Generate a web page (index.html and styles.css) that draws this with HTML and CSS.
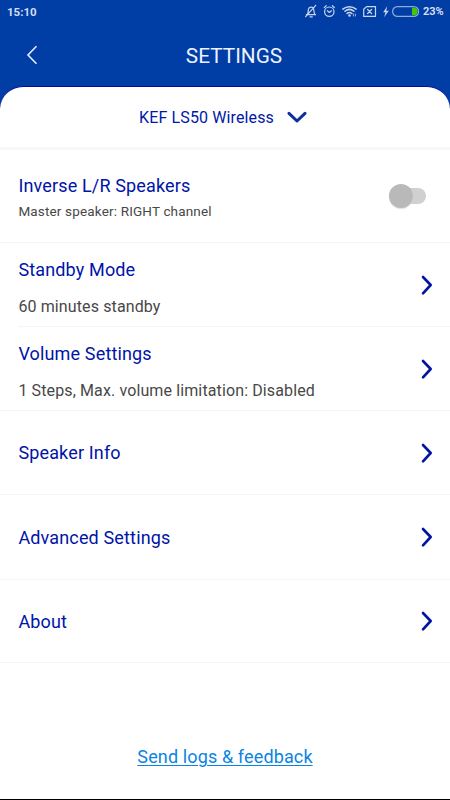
FILE: index.html
```html
<!DOCTYPE html>
<html lang="en">
<head>
<meta charset="utf-8">
<title>Settings</title>
<link rel="stylesheet" href="styles.css">
</head>
<body>
<div class="screen">
  <div class="status-bar">
    <span class="clock">15:10</span>
    <svg class="status-icons" width="116" height="20" viewBox="304 2 116 20" fill="none" stroke="#c8d5ef" stroke-width="1.2" stroke-linecap="round" stroke-linejoin="round">
      <path d="M306.300 14.600h9.300M307.400 14.300c1-1.500.7-4 1.200-5.600.7-2 4.200-2 5 0 .5 1.600.1 4.100 1.200 5.600M310 16.800h2.300M315.700 5.300 305.700 16.700"/>
      <circle cx="329.300" cy="11.700" r="4.700"/>
      <path d="M327.300 10.800l2 1.700 2.200-1.700M324.200 7.600l2-1.900M334.400 7.600l-2-1.900"/>
      <path d="M342.800 9.100c3.900-3.300 9.400-3.300 13.300 0M344.900 11.300c2.700-2.300 6.400-2.300 9.100 0M347 13.500c1.500-1.300 3.400-1.300 4.900 0" stroke-width="1.500"/>
      <circle cx="349.500" cy="15.500" r=".7" fill="#c8d5ef"/>
      <path d="M353.400 16v-2M355.400 14v2" stroke-width=".8"/>
      <path d="M366.600 6.600h8.900v9.800h-11.800V9.300zM367.600 9.500l4 4M371.600 9.500l-4 4"/>
      <path d="M387.300 6.300l-4.200 6h2.400l-1.400 5 4.700-6.500h-2.600z" fill="#c8d5ef" stroke="none"/>
      <rect x="392.600" y="6.600" width="26" height="9.800" rx="4.900" stroke="#8eabdc"/>
      <path d="M412 7.700h1.800a3.800 3.800 0 0 1 0 7.600H412z" fill="#43c700" stroke="none"/>
    </svg>
    <span class="percent">23%</span>
  </div>
  <div class="header">
    <svg class="back" width="12" height="20" viewBox="0 0 12 20"><path d="M10.500 1.300 2 10l8.500 8.700"/></svg>
    <h1>SETTINGS</h1>
  </div>
  <div class="device">
    <span>KEF LS50 Wireless</span>
    <svg width="20" height="13" viewBox="0 0 20 13"><path d="M2 2.300l8 7.700 8-7.700"/></svg>
  </div>
  <div class="row first">
    <div class="text"><h2>Inverse L/R Speakers</h2><p class="small">Master speaker: RIGHT channel</p></div>
    <span class="switch"><span class="knob"></span></span>
  </div>
  <div class="row detail inset">
    <div class="text"><h2>Standby Mode</h2><p>60 minutes standby</p></div>
    <svg class="chevron" width="14" height="22" viewBox="0 0 14 22"><path d="M3 3l7.700 8L3 19.300"/></svg>
  </div>
  <div class="row detail">
    <div class="text"><h2>Volume Settings</h2><p>1 Steps, Max. volume limitation: Disabled</p></div>
    <svg class="chevron" width="14" height="22" viewBox="0 0 14 22"><path d="M3 3l7.700 8L3 19.300"/></svg>
  </div>
  <div class="row">
    <h2>Speaker Info</h2>
    <svg class="chevron" width="14" height="22" viewBox="0 0 14 22"><path d="M3 3l7.700 8L3 19.300"/></svg>
  </div>
  <div class="row tall">
    <h2>Advanced Settings</h2>
    <svg class="chevron" width="14" height="22" viewBox="0 0 14 22"><path d="M3 3l7.700 8L3 19.300"/></svg>
  </div>
  <div class="row short">
    <h2>About</h2>
    <svg class="chevron" width="14" height="22" viewBox="0 0 14 22"><path d="M3 3l7.700 8L3 19.300"/></svg>
  </div>
  <div class="footer"><a>Send logs &amp; feedback</a></div>
</div>
</body>
</html>
```
FILE: styles.css
```css
* { box-sizing: border-box; }
body { margin: 0; font-family: Roboto, sans-serif; }
h1, h2, p { margin: 0; font-weight: 400; white-space: nowrap; }
svg { flex: none; }
.screen {
  width: 450px;
  height: 800px;
  display: flex;
  flex-direction: column;
  background: linear-gradient(#003da5 0 130px, #fff 130px);
  border-bottom: 1px solid #000;
  overflow: hidden;
}
.status-bar {
  flex: none;
  height: 24px;
  padding: 2px 7px;
  display: flex;
  align-items: center;
  color: #d3def3;
  font-size: 11.500px;
  font-weight: 700;
  line-height: 20px;
}
.status-icons { margin-left: auto; }
.percent { width: 20px; margin-left: 3px; font-size: 11px; }
.header {
  flex: none;
  height: 62px;
  position: relative;
  display: flex;
  align-items: center;
  justify-content: center;
  padding: 2px 0 0 18px;
}
.header h1 { color: #edf2ff; font-size: 20.800px; line-height: 24px; }
.back { position: absolute; left: 26px; top: 21px; fill: none; stroke: #e8eeff; stroke-width: 1.600; }
.device {
  flex: none;
  height: 64px;
  display: flex;
  align-items: center;
  justify-content: center;
  gap: 13px;
  padding-right: 4px;
  background: #fff;
  border-top: 1px solid #00109c;
  border-bottom: 3px solid #f8f8f8;
  border-radius: 23px 23px 0 0;
  color: #0018a8;
  font-size: 16px;
  letter-spacing: 0.120px;
}
.device svg { fill: none; stroke: #0c309c; stroke-width: 3; stroke-linecap: round; stroke-linejoin: round; }
.row {
  flex: none;
  height: 84px;
  padding: 1px 16px 0 18.400px;
  display: flex;
  align-items: center;
  justify-content: space-between;
  background: #fff;
  border-bottom: 1px solid #f4f4f4;
}
.row h2 { color: #0014a8; font-size: 18px; line-height: 24px; letter-spacing: 0.150px; }
.row p { color: #484848; font-size: 16px; line-height: 24px; letter-spacing: 0.120px; margin-top: 13px; }
.row .small { font-size: 13.500px; line-height: 20px; letter-spacing: 0.160px; margin-top: 3px; }
.first { height: 93px; padding-right: 24px; }
.first .text { padding-top: 1px; }
.detail .text { padding-top: 6px; }
.inset { border-bottom: 0; background: linear-gradient(#f4f4f4, #f4f4f4) 18px 100% / 432px 1px no-repeat #fff; }
.tall { height: 85px; }
.short { height: 83px; }
.chevron { margin-top: -1px; fill: none; stroke: #0014a0; stroke-width: 2.600; stroke-linecap: round; stroke-linejoin: round; }
.switch { position: relative; width: 33px; height: 16px; margin-top: -2px; border-radius: 8px; background: #d0d0d0; }
.knob { position: absolute; left: -4px; top: -4px; width: 24px; height: 24px; border-radius: 50%; background: #b9b9b9; box-shadow: 0 1px 1px #ddd; }
.footer { flex: 1; padding-top: 82px; text-align: center; }
.footer a { color: #0a84e0; font-size: 18px; line-height: 24px; letter-spacing: 0.130px; text-decoration: underline; text-decoration-thickness: 1px; text-underline-offset: 2px; }
```
